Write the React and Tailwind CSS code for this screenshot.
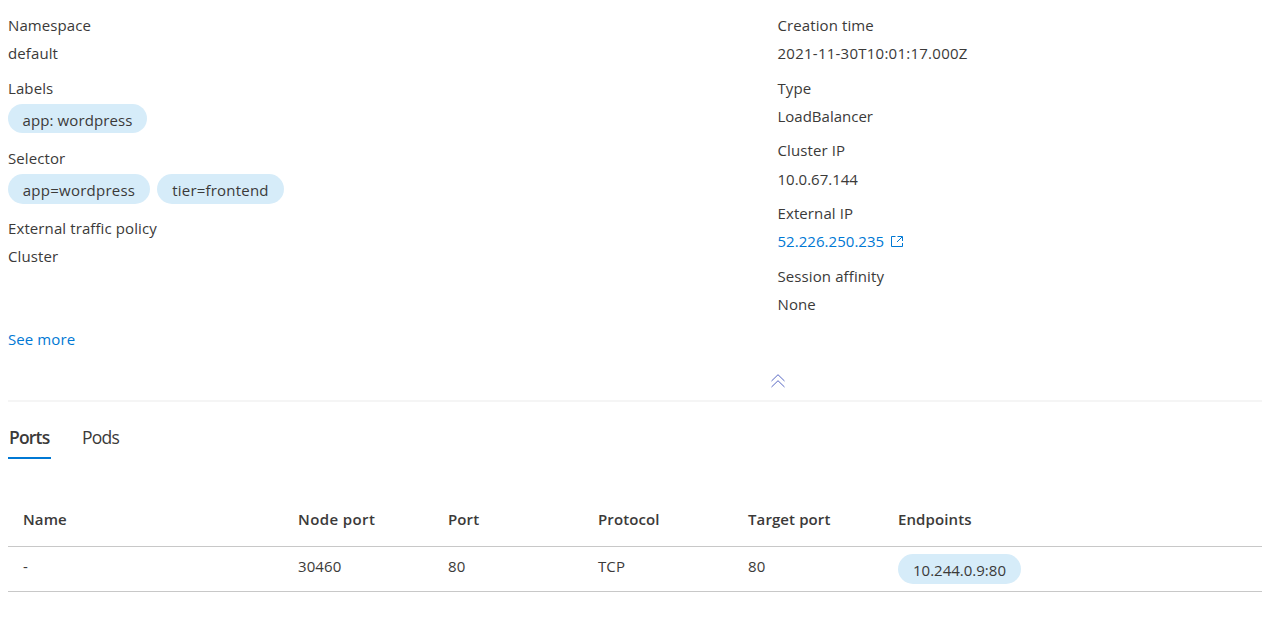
const chip =
  "flex items-center justify-center rounded-full bg-[#d6ecf9] leading-6";

function Field({ label, className = "", valueClass = "", children }) {
  return (
    <div className={className}>
      <div className="h-7 leading-7">{label}</div>
      <div className={`flex h-7 leading-7 ${valueClass}`}>{children}</div>
    </div>
  );
}

function OpenIcon() {
  return (
    <svg width="12" height="12" viewBox="0 0 12 12" fill="none" stroke="#0078d4" className="ml-[7px] mt-[9px]">
      <path d="M4.500 .5H.5v10h11V7" />
      <path d="M6.500 .5h5V5M11 1L6 6" />
    </svg>
  );
}

const columns = [
  ["Name", "-"],
  ["Node port", "30460"],
  ["Port", "80"],
  ["Protocol", "TCP"],
  ["Target port", "80"],
];

const rowGrid =
  "grid grid-cols-[275px_150px_150px_150px_150px_1fr] border-b border-[#c8c8c8] pl-[15px]";

export default function App() {
  return (
    <main className="h-[628px] overflow-hidden bg-white pl-2 font-['Open_Sans','Noto_Sans',sans-serif] text-[15px] tracking-[0.1px] text-[#3b3a39]">
      <section className="flex h-[400px] pt-[11px]">
        <div className="w-[769.500px]">
          <Field label="Namespace">default</Field>
          <Field label="Labels" className="mt-[7px] h-[70px]">
            <span className={`${chip} mt-[2px] h-[29px] w-[139px] pt-[3px]`}>app: wordpress</span>
          </Field>
          <Field label="Selector" className="h-[70px]">
            <span className={`${chip} mt-[2px] h-[30px] w-[142px] pt-[2px] tracking-[0.25px]`}>app=wordpress</span>
            <span className={`${chip} mt-[2px] ml-[7px] h-[30px] w-[127px] pt-[2px] tracking-[0.2px]`}>tier=frontend</span>
          </Field>
          <Field label="External traffic policy">Cluster</Field>
          <a className="mt-[55px] block leading-7 text-[#0078d4]">See more</a>
        </div>
        <div className="flex flex-col">
          <Field label="Creation time" valueClass="tracking-[0.25px]">2021-11-30T10:01:17.000Z</Field>
          <Field label="Type" className="mt-[7px]">
            <span className="tracking-normal">LoadBalancer</span>
          </Field>
          <Field label="Cluster IP" className="mt-[6px]" valueClass="pt-px tracking-normal">10.0.67.144</Field>
          <Field label="External IP" className="mt-[7px]" valueClass="text-[#0078d4]">
            <span className="tracking-[0.04px]">52.226.250.235</span>
            <OpenIcon />
          </Field>
          <Field label="Session affinity" className="mt-[7px]">None</Field>
          <svg width="16" height="16" viewBox="0 0 16 16" fill="none" stroke="#5868c4" className="-ml-2 mt-[55px]">
            <path d="M1.500 8L8 1.700 14.500 8M1.500 14L8 7.700 14.500 14" />
          </svg>
        </div>
      </section>
      <hr className="border-0 border-t-2 border-[#f5f5f5]" />
      <nav className="mt-[15px] flex h-[42px] gap-[31px] text-[17.500px] leading-[41px]">
        <div className="w-[43px] border-b-2 border-[#0078d4] pl-px font-semibold tracking-[-0.8px]">Ports</div>
        <div className="tracking-[-0.75px]">Pods</div>
      </nav>
      <section>
        <div className={`${rowGrid} mt-[33px] h-[55px] pt-[13px] font-semibold leading-7`}>
          {columns.map(([name]) => (
            <div key={name} className={name === "Node port" ? "tracking-[0.4px]" : ""}>{name}</div>
          ))}
          <div>Endpoints</div>
        </div>
        <div className={`${rowGrid} h-[45px] pt-[5px] leading-7`}>
          {columns.map(([name, value]) => (
            <div key={name}>{value}</div>
          ))}
          <div className={`${chip} mt-[2px] h-[30px] w-[123px] pt-[2px] tracking-normal`}>10.244.0.9:80</div>
        </div>
      </section>
    </main>
  );
}
